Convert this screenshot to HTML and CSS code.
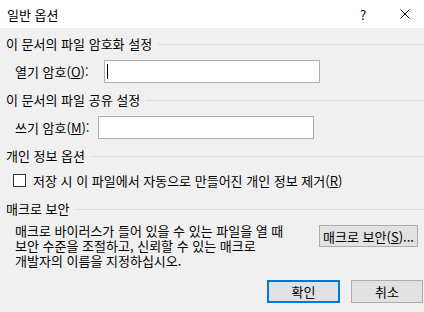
FILE: index.html
```html
<!DOCTYPE html>
<html lang="ko">
<head>
  <meta charset="UTF-8" />
  <title>일반 옵션</title>
  <link rel="stylesheet" href="styles.css">
</head>
<body>
  <div class="dialog">
    <div class="titlebar">
      <div class="title">일반 옵션</div>
      <div class="title-btn help">?</div>
      <div class="title-btn close">
        <svg width="10" height="10" viewBox="0 0 10 10">
          <path d="M0.5 0.5 L9.5 9.5 M9.5 0.5 L0.5 9.5" stroke="#000" stroke-width="1" fill="none" />
        </svg>
      </div>
    </div>

    <div class="content">
      <div class="group-head"><span>이 문서의 파일 암호화 설정</span></div>
      <div class="field-row">
        <span class="label open-label">열기 암호(<u>O</u>):</span>
        <div class="textbox"><span class="caret"></span></div>
      </div>

      <div class="group-head gap-9"><span>이 문서의 파일 공유 설정</span></div>
      <div class="field-row">
        <span class="label write-label">쓰기 암호(<u>M</u>):</span>
        <div class="textbox"></div>
      </div>

      <div class="group-head gap-9"><span>개인 정보 옵션</span></div>
      <div class="check-row">
        <span class="checkbox"></span>
        <span>저장 시 이 파일에서 자동으로 만들어진 개인 정보 제거(<u>R</u>)</span>
      </div>

      <div class="group-head gap-13"><span>매크로 보안</span></div>
      <div class="macro-row">
        <p class="macro-text">매크로 바이러스가 들어 있을 수 있는 파일을 열 때<br>보안 수준을 조절하고, 신뢰할 수 있는 매크로<br>개발자의 이름을 지정하십시오.</p>
        <button class="btn macro-btn">매크로 보안(<u>S</u>)...</button>
      </div>

      <div class="actions">
        <button class="btn default">확인</button>
        <button class="btn">취소</button>
      </div>
    </div>
  </div>
</body>
</html>
```

FILE: styles.css
```css
body {
  margin: 0;
  font-family: "Noto Sans CJK KR", "Noto Sans", sans-serif;
  font-size: 13px;
  color: #000;
  background-color: #f0f0f0;
}
.dialog {
  width: 424px;
  height: 312px;
  background-color: #f0f0f0;
  overflow: hidden;
}
.titlebar {
  height: 28px;
  background-color: #fff;
  display: flex;
  align-items: center;
}
.title {
  flex: 1;
  padding-left: 7px;
}
.title-btn {
  height: 28px;
  display: flex;
  justify-content: center;
  align-items: center;
}
.help {
  width: 46px;
  font-size: 13px;
}
.close {
  width: 38px;
}
.content {
  display: flex;
  flex-direction: column;
}
.group-head {
  display: flex;
  align-items: center;
  height: 16px;
  line-height: 16px;
  margin-top: 8px;
  padding-left: 6px;
  white-space: nowrap;
}
.group-head::after {
  content: "";
  flex: 1;
  border-top: 1px solid #dcdcdc;
  margin-left: 6px;
}
.gap-9 {
  margin-top: 9px;
}
.gap-13 {
  margin-top: 13px;
}
.field-row {
  display: flex;
  align-items: center;
  height: 23px;
  margin-top: 8px;
  padding-left: 15px;
}
.label {
  white-space: nowrap;
}
.open-label {
  width: 89px;
}
.write-label {
  width: 83px;
}
.textbox {
  height: 21px;
  width: 214px;
  background-color: #fff;
  border: 1px solid #abadb3;
  display: flex;
  align-items: center;
}
.caret {
  width: 1px;
  height: 15px;
  margin-left: 2px;
  background-color: #000;
}
.check-row {
  display: flex;
  align-items: center;
  height: 16px;
  margin-top: 8px;
  padding-left: 13px;
  white-space: nowrap;
}
.checkbox {
  width: 11px;
  height: 11px;
  border: 1px solid #333;
  background-color: #fff;
  margin-right: 7px;
}
.macro-row {
  display: flex;
  align-items: flex-start;
  justify-content: space-between;
  margin-top: 6px;
  padding-left: 15px;
  padding-right: 6px;
}
.macro-text {
  margin: 0;
  line-height: 15px;
  white-space: nowrap;
}
.btn {
  font-family: inherit;
  font-size: 13px;
  color: #000;
  background-color: #e1e1e1;
  border: 1px solid #adadad;
  height: 23px;
  padding: 0;
  white-space: nowrap;
}
.macro-btn {
  width: 99px;
  height: 22px;
  margin-top: 2px;
}
.actions {
  display: flex;
  justify-content: flex-end;
  gap: 11px;
  margin-top: 12px;
  padding-right: 1px;
}
.actions .btn {
  width: 72px;
}
.actions .default {
  width: 73px;
  border: 2px solid #0078d7;
}
```
